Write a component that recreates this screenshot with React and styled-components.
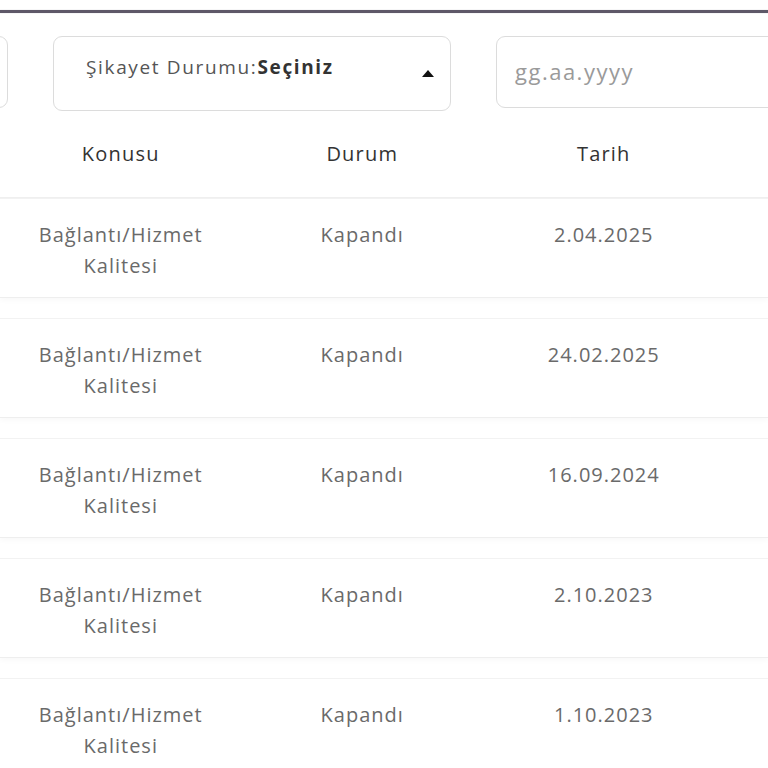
import React from 'react';
import styled, { createGlobalStyle } from 'styled-components';

const GlobalStyle = createGlobalStyle`
  html, body {
    margin: 0;
    padding: 0;
    background: #fff;
    overflow: hidden;
  }
  body {
    font-family: "Open Sans", "Noto Sans", sans-serif;
  }
`;

const Page = styled.div`
  width: 768px;
  height: 768px;
  overflow: hidden;
  padding-top: 10px;
  box-sizing: border-box;
`;

const TopLine = styled.div`
  height: 3px;
  background: #5e5868;
  box-shadow: 0 0 1px rgba(94, 88, 104, 0.5);
`;

const Filters = styled.div`
  display: flex;
  align-items: flex-start;
  gap: 45px;
  margin-top: 23px;
  margin-left: -192px;
`;

const Box = styled.div`
  flex: none;
  box-sizing: border-box;
  width: ${p => p.$w}px;
  height: ${p => p.$h}px;
  border: 1px solid #dcdcdc;
  border-radius: 9px;
  background: #fff;
`;

const SelectBox = styled(Box)`
  display: flex;
  align-items: flex-start;
  justify-content: space-between;
  padding: 17px 16px 0 32px;
`;

const SelectLabel = styled.span`
  font-size: 19px;
  line-height: 26px;
  color: #555;
  letter-spacing: 1.65px;
  b {
    font-weight: 700;
    color: #333;
    letter-spacing: 1.6px;
  }
`;

const Caret = styled.span`
  width: 0;
  height: 0;
  margin-top: 16px;
  border-left: 6px solid transparent;
  border-right: 6px solid transparent;
  border-bottom: 7px solid #111;
`;

const DateBox = styled(Box)`
  display: flex;
  align-items: center;
  padding-left: 18px;
  padding-bottom: 2px;
  font-size: 22px;
  color: #9a9a9a;
  letter-spacing: 1.5px;
`;

const Grid = styled.div`
  display: grid;
  grid-template-columns: repeat(4, 241.5px);
`;

const HeadRow = styled(Grid)`
  height: 86px;
  align-items: center;
  border-bottom: 1px solid #efefef;
`;

const HeadCell = styled.div`
  text-align: center;
  font-size: 20px;
  color: #333;
  letter-spacing: 1.2px;
  margin-top: -2px;
`;

const List = styled.div`
  display: flex;
  flex-direction: column;
  gap: 20px;
`;

const Row = styled(Grid)`
  height: 100px;
  box-sizing: border-box;
  padding-top: 20px;
  align-items: start;
  border-top: 1px solid #f2f2f2;
  border-bottom: 1px solid #eeeeee;
  box-shadow: 0 3px 5px rgba(0, 0, 0, 0.025);
`;

const Cell = styled.div`
  text-align: center;
  font-size: 20px;
  line-height: 31px;
  color: #6a6a6a;
  letter-spacing: 1px;
`;

const complaints = [
  { topic: ['Bağlantı/Hizmet', 'Kalitesi'], status: 'Kapandı', date: '2.04.2025' },
  { topic: ['Bağlantı/Hizmet', 'Kalitesi'], status: 'Kapandı', date: '24.02.2025' },
  { topic: ['Bağlantı/Hizmet', 'Kalitesi'], status: 'Kapandı', date: '16.09.2024' },
  { topic: ['Bağlantı/Hizmet', 'Kalitesi'], status: 'Kapandı', date: '2.10.2023' },
  { topic: ['Bağlantı/Hizmet', 'Kalitesi'], status: 'Kapandı', date: '1.10.2023' },
];

export default function App() {
  return (
    <Page>
      <GlobalStyle />
      <TopLine />
      <Filters>
        <Box $w={200} $h={72} />
        <SelectBox $w={398} $h={75}>
          <SelectLabel>
            Şikayet Durumu:<b>Seçiniz</b>
          </SelectLabel>
          <Caret />
        </SelectBox>
        <DateBox $w={320} $h={72}>gg.aa.yyyy</DateBox>
      </Filters>

      <HeadRow>
        <HeadCell>Konusu</HeadCell>
        <HeadCell>Durum</HeadCell>
        <HeadCell>Tarih</HeadCell>
        <HeadCell />
      </HeadRow>

      <List>
        {complaints.map((c, i) => (
          <Row key={i}>
            <Cell>
              {c.topic[0]}
              <br />
              {c.topic[1]}
            </Cell>
            <Cell>{c.status}</Cell>
            <Cell>{c.date}</Cell>
            <Cell />
          </Row>
        ))}
      </List>
    </Page>
  );
}
